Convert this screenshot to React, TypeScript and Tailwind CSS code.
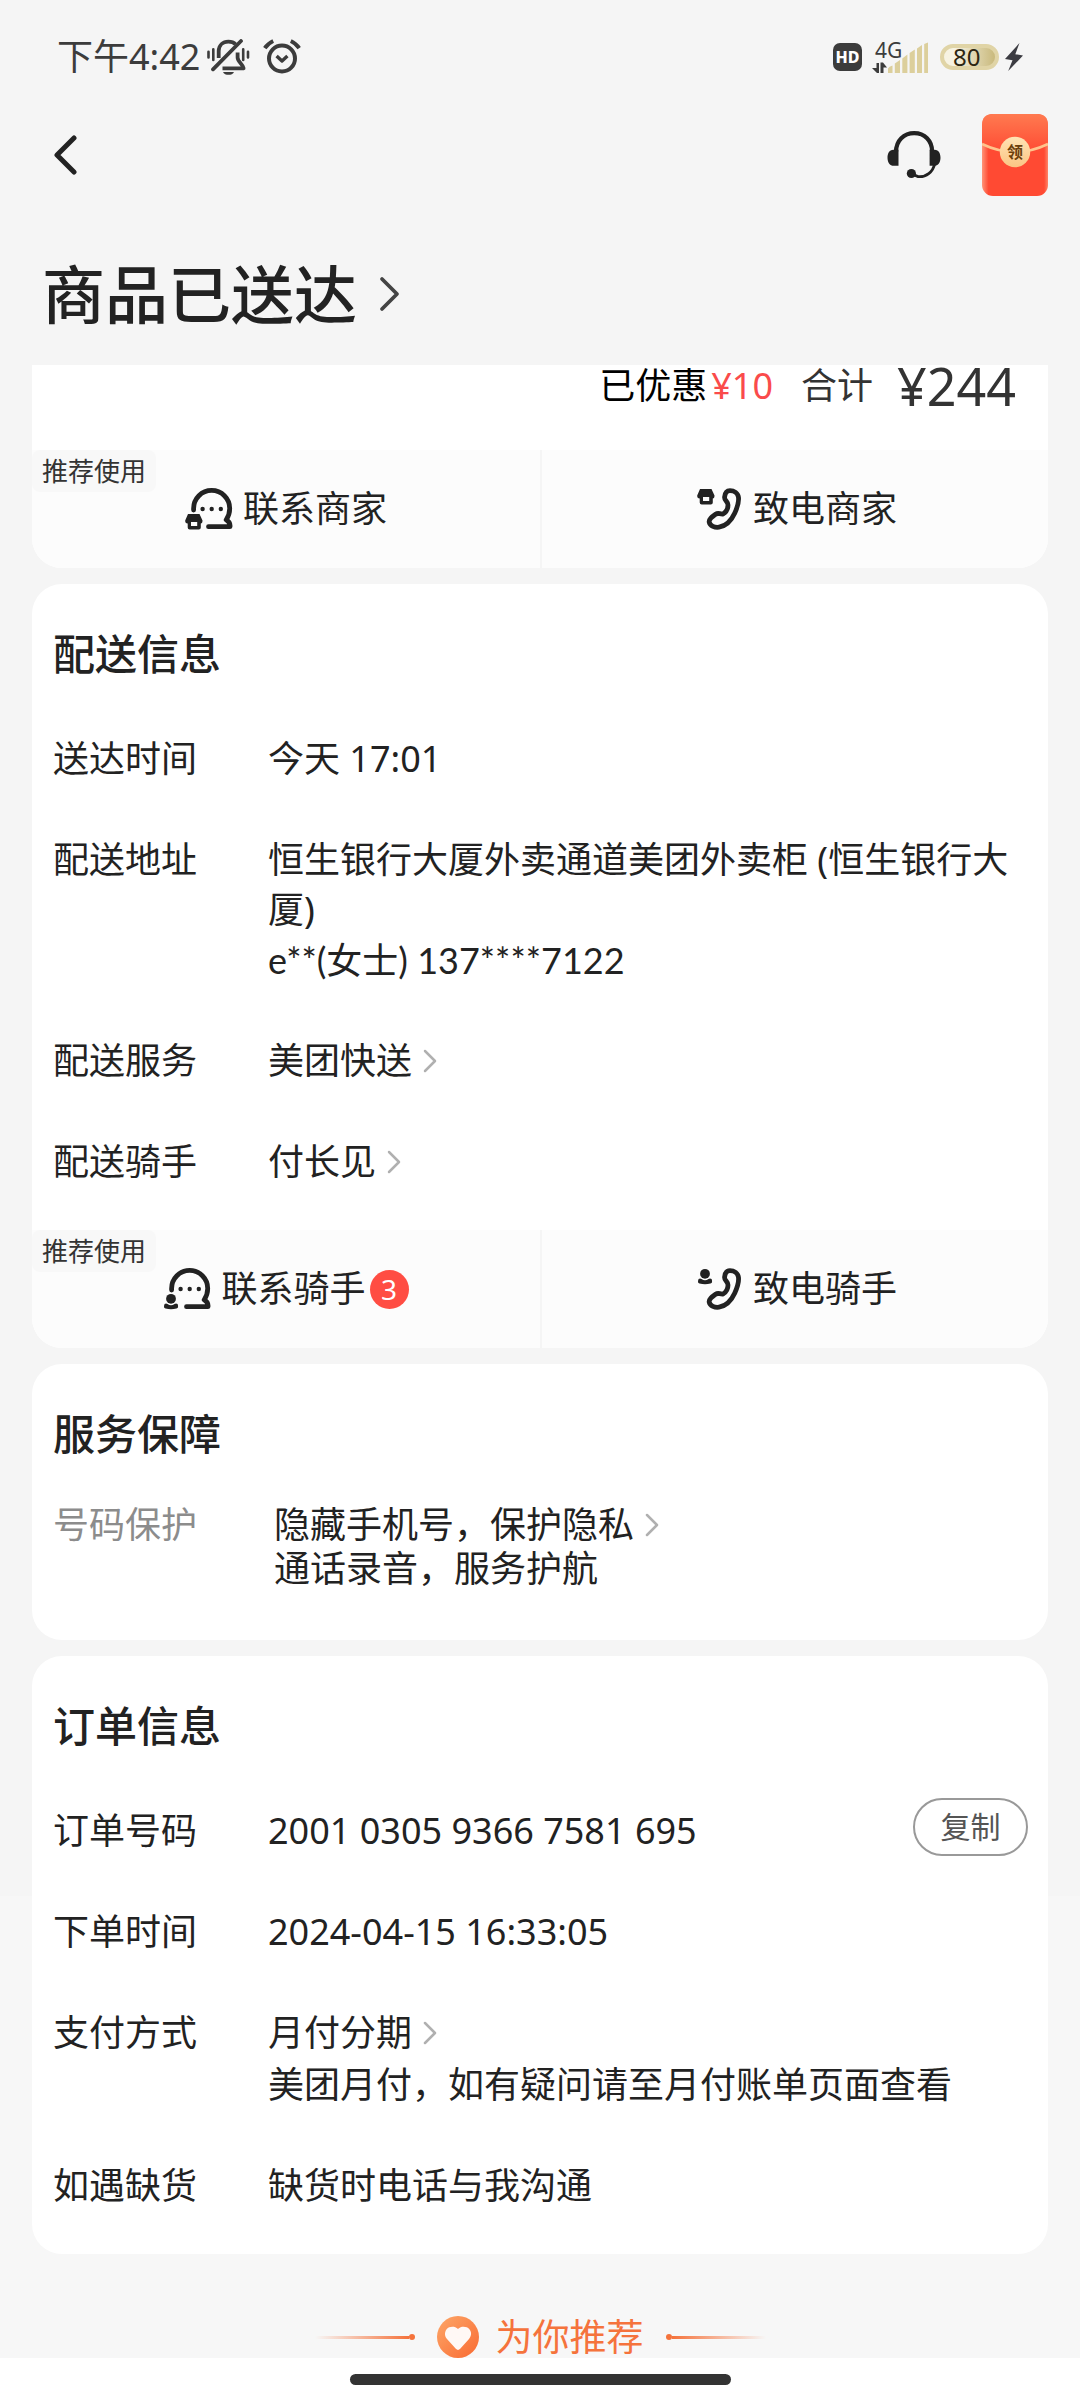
import type { ReactNode } from "react"

function Chevron({ className }: { className?: string }) {
  return (
    <svg viewBox="0 0 14 24" fill="none" stroke="currentColor" strokeWidth="2.5" strokeLinecap="round" strokeLinejoin="round" className={className} aria-hidden="true">
      <path d="M2 2 L12 12 L2 22" />
    </svg>
  )
}

function MutedBellIcon() {
  return (
    <svg viewBox="0 0 44 37" className="w-[44px] h-[37px]" fill="none" stroke="currentColor" strokeWidth="3.8" aria-hidden="true">
      <path d="M11.7 19 V12 C12 6 16 2.7 21.3 2.7 C24.5 2.7 27 3.6 28.5 5.2" />
      <path d="M30.6 13.5 V18.5 C30.6 23 36 25 36.6 29.3 H15.5" strokeLinejoin="round" />
      <path d="M34 2 L6 30.3" strokeLinecap="round" />
      <path d="M16 33 H27 C25.5 36.8 17.5 36.8 16 33Z" fill="currentColor" stroke="none" />
      <path d="M1.5 12.8 V18.4 M6.3 10.4 V21 M36.2 10.4 V21 M41 12.8 V18.4" strokeWidth="2.6" strokeLinecap="round" />
    </svg>
  )
}

function AlarmIcon() {
  return (
    <svg viewBox="0 0 38 36" className="w-[38px] h-[36px]" fill="none" stroke="currentColor" strokeWidth="4" aria-hidden="true">
      <circle cx="19" cy="19.5" r="13" />
      <path d="M13.6 17 L19 22 L24.4 17" strokeWidth="3.4" strokeLinejoin="round" />
      <path d="M1.8 9.2 C4 6 6.5 3.6 10.2 2 M36.2 9.2 C34 6 31.5 3.6 27.8 2" />
    </svg>
  )
}

function SignalIcon() {
  return (
    <svg viewBox="0 0 58 32" className="w-[58px] h-[32px] overflow-visible" aria-hidden="true">
      <text x="3" y="17" fontSize="21" fill="#3c3c3c">4G</text>
      <path d="M0 27 L4.5 27 V22 H7 V32 H5Z M8.5 21.5 H11 L15 26.5 H11.5 V32 H8.5Z" fill="#3c3c3c" />
      <path d="M17 27.5 Q18 25.5 21.5 24.5 V32 H17Z M23.8 22.5 L29 19 V32 H23.8Z M31.3 17.5 L36.4 13.5 V32 H31.3Z M38.6 12 L43.8 8.5 V32 H38.6Z M46 7.5 L51 4 V32 H46Z M53.2 3 L57 1.5 V32 H53.2Z" fill="#dccf9c" transform="translate(-1 0)" />
    </svg>
  )
}

function HeadsetIcon() {
  return (
    <svg viewBox="0 0 54 48" className="w-[54px] h-[48px]" fill="none" stroke="currentColor" aria-hidden="true">
      <path d="M9 21 C9 9.5 17 2.2 27.2 2.2 C37.5 2.2 45.2 9.5 45.2 21" strokeWidth="4.2" />
      <path d="M11.5 18.7 H6.5 C2 18.7 0.5 23 0.5 26.7 C0.5 31 2.5 34.8 7 34.8 H11.5Z M42.6 18.7 H47.5 C52 18.7 53.5 23 53.5 26.7 C53.5 31 51.5 34.8 47 34.8 H42.6Z" fill="currentColor" stroke="none" />
      <path d="M47.6 33 C46 41 39 46.5 31 45.6 L25 43" strokeWidth="2.8" />
      <circle cx="24.4" cy="42.5" r="4.6" fill="currentColor" stroke="none" />
    </svg>
  )
}

function RedPacketIcon() {
  return (
    <svg viewBox="0 0 66 82" className="w-[66px] h-[82px]" aria-hidden="true">
      <defs>
        <linearGradient id="flap" x1="0" y1="0" x2="0" y2="1">
          <stop offset="0" stopColor="#ff7a50" />
          <stop offset="1" stopColor="#ff4a33" />
        </linearGradient>
        <linearGradient id="sheen" x1="0" y1="0" x2="1" y2="0">
          <stop offset="0" stopColor="#ff9478" />
          <stop offset="0.1" stopColor="#ff4a33" />
          <stop offset="0.94" stopColor="#ff4a33" />
          <stop offset="1" stopColor="#ff8468" />
        </linearGradient>
        <linearGradient id="seal" x1="0" y1="0" x2="0" y2="1">
          <stop offset="0" stopColor="#ffe3b4" />
          <stop offset="1" stopColor="#fbc584" />
        </linearGradient>
      </defs>
      <rect width="66" height="82" rx="11" fill="url(#sheen)" />
      <path d="M0 30 V11 Q0 0 11 0 H55 Q66 0 66 11 V30 Q33 48 0 30Z" fill="url(#flap)" />
      <path d="M0 30 Q33 46 66 30" fill="none" stroke="#ffc48c" strokeWidth="2.6" />
      <circle cx="33" cy="38" r="15.2" fill="url(#seal)" />
      <text x="33" y="44" textAnchor="middle" fontSize="16" fontWeight="700" fill="#6b3f0c">领</text>
    </svg>
  )
}

function ShopMark() {
  return <path fillRule="evenodd" fill="currentColor" stroke="none" d="M3 0 H14.5 L17.5 6.5 Q17.5 9.5 15.8 9.5 V13.5 Q15.8 15.5 13.8 15.5 H4.7 Q2.7 15.5 2.7 13.5 V9.5 Q0 9.5 0.2 6.5Z M6 8 V12 H12.2 V8Z" />
}

function RiderMark() {
  return (
    <g fill="currentColor" stroke="none">
      <circle cx="8" cy="4.8" r="4.9" />
      <path d="M1.6 10 Q3 9 4.5 10 Q8 12.6 11.5 10 Q13 9 14.6 10 Q16 14 13.5 14.6 Q8 16 2.5 14.6 Q0 14 1.6 10Z" />
    </g>
  )
}

function ChatIcon({ mark }: { mark: ReactNode }) {
  return (
    <svg viewBox="0 0 48 42" className="w-[48px] h-[42px]" fill="none" stroke="currentColor" strokeWidth="4.8" strokeLinecap="round" strokeLinejoin="round" aria-hidden="true">
      <path d="M8.6 22 V20.5 A18 18 0 0 1 44.7 20.5 C44.7 25 43.4 28.5 41.2 31.8 Q45.5 34 45 38.7 H23.5" />
      <g fill="currentColor" stroke="none">
        <circle cx="17.6" cy="21" r="2.2" />
        <circle cx="26.7" cy="21" r="2.2" />
        <circle cx="35.8" cy="21" r="2.2" />
      </g>
      <g transform="translate(0 26)">{mark}</g>
    </svg>
  )
}

function PhoneIcon({ mark }: { mark: ReactNode }) {
  return (
    <svg viewBox="0 0 46 42" className="w-[46px] h-[42px]" fill="none" stroke="currentColor" strokeWidth="4.8" strokeLinejoin="round" aria-hidden="true">
      <path d="M33 2.6 C29.5 2.6 28 5 27.6 9 C27.2 13 31 13.2 31 17 C31 21 28.5 24.5 26 26 C22.5 26.3 21.5 24.3 18.5 26.3 C15 28.8 11.8 31 12.2 34 C13 38 18 39.8 22 39.2 C29 38 34.6 32 37.8 25 C40.5 19 42 14 41.5 9.5 C41 5 37 2.6 33 2.6Z" />
      <g transform="translate(0 1)">{mark}</g>
    </svg>
  )
}

function HeartIcon() {
  return (
    <svg viewBox="0 0 42 42" className="w-[42px] h-[42px] shrink-0" aria-hidden="true">
      <defs>
        <linearGradient id="heart" x1="0" y1="0" x2="1" y2="1">
          <stop offset="0" stopColor="#fda768" />
          <stop offset="1" stopColor="#f96a32" />
        </linearGradient>
      </defs>
      <circle cx="21" cy="21" r="21" fill="url(#heart)" />
      <path d="M21 13 C17.5 9.6 12 10.6 9.8 13 C7 16.5 7.8 20.5 10 23 L18.8 32.8 Q21 35 23.2 32.8 L32 23 C34.5 20 35 16 32.2 13 C30 10.6 24.5 9.6 21 13Z" fill="#fff8f5" />
    </svg>
  )
}

function Card({ title, children }: { title: string; children: ReactNode }) {
  return (
    <section className="mt-4 bg-white rounded-[30px] overflow-hidden">
      <h2 className="px-[21px] pt-[45px] text-[42px] leading-[50px] font-medium">{title}</h2>
      {children}
    </section>
  )
}

function Row({ label, children }: { label: string; children: ReactNode }) {
  return (
    <div className="flex">
      <dt className="w-[215px] shrink-0">{label}</dt>
      <dd className="flex-1">{children}</dd>
    </div>
  )
}

function LinkValue({ children }: { children: ReactNode }) {
  return (
    <a href="#" className="inline-flex items-center gap-[11px]">
      {children}
      <Chevron className="w-[14px] h-[24px] text-[#b0b0b0]" />
    </a>
  )
}

function ContactBar({ target, mark, unread }: { target: string; mark: ReactNode; unread?: number }) {
  return (
    <div className="relative grid grid-cols-2 h-[118px] bg-[#fcfcfc] rounded-b-[30px] overflow-hidden">
      <span className="absolute left-0 top-0 px-[10px] bg-[#f8f8f8] rounded-lg text-[26px] leading-[42px] text-[#333]">推荐使用</span>
      <button className="flex items-center justify-center gap-[10px]">
        <ChatIcon mark={mark} />
        <span className="flex items-center gap-1">
          联系{target}
          {unread && (
            <span className="w-[39px] h-[39px] rounded-full bg-[#ff4d43] text-white text-[28px] leading-[39px] text-center">{unread}</span>
          )}
        </span>
      </button>
      <button className="flex items-center justify-center gap-[10px] pl-1 border-l-2 border-[#f5f5f5]">
        <PhoneIcon mark={mark} />
        致电{target}
      </button>
    </div>
  )
}

export default function App() {
  return (
    <div className="bg-[linear-gradient(#f5f5f5_79%,#f7f7f7_79%)] text-[#222] text-[36px] leading-[50px] font-['Noto_Sans','Noto_Sans_CJK_SC',sans-serif]">
      <div className="flex items-center justify-between h-[114px] pl-[57px] pr-[57px] text-[#3c3c3c]">
        <div className="flex items-center">
          <span>下午4:42</span>
          <span className="ml-[7px]"><MutedBellIcon /></span>
          <span className="ml-3"><AlarmIcon /></span>
        </div>
        <div className="flex items-center">
          <span className="w-[29px] h-[28px] rounded-[7px] bg-[#3c3c3c] text-white text-[16px] leading-[28px] font-extrabold text-center">HD</span>
          <span className="ml-[10px]"><SignalIcon /></span>
          <span className="ml-[10px] w-[59px] h-[26px] rounded-full border-4 border-[#e0d4a6] bg-linear-to-r from-[#f7f3e2] from-20% to-[#c9b97c] text-[#2c2612] text-[24px] leading-[18px] pl-[9px]">80</span>
          <svg viewBox="0 0 18 28" className="ml-[6px] w-[18px] h-[28px]" fill="#3c3c42" aria-hidden="true">
            <path d="M14.5 0 L0 16 L7.5 17.2 L3.2 28 L18 12.6 L10.3 11.2Z" />
          </svg>
        </div>
      </div>

      <header className="flex items-center justify-between h-[82px] pl-[53px] pr-8">
        <button aria-label="返回">
          <svg viewBox="0 0 24 40" className="w-[24px] h-[40px]" fill="none" stroke="currentColor" strokeWidth="5" strokeLinecap="round" strokeLinejoin="round" aria-hidden="true">
            <path d="M21 3 L4 20 L21 37" />
          </svg>
        </button>
        <div className="flex items-center gap-[41px]">
          <button aria-label="客服"><HeadsetIcon /></button>
          <button aria-label="领红包"><RedPacketIcon /></button>
        </div>
      </header>

      <h1 className="mt-[62px] mb-[35px] px-[42px] text-[63px] leading-[72px] font-medium">
        <a href="#" className="inline-flex items-center gap-[22px]">
          商品已送达
          <Chevron className="w-[21px] h-[36px] text-[#444]" />
        </a>
      </h1>

      <main className="px-8">
        <section className="bg-white rounded-b-[30px]">
          <div className="flex items-center justify-end h-[42px] mb-[43px] pr-8">
            <span className="text-black">已优惠</span>
            <span className="ml-1 text-[#fa4b4b]">¥10</span>
            <span className="ml-7 text-[#333]">合计</span>
            <span className="ml-6 text-[52px] text-[#333]">¥244</span>
          </div>
          <ContactBar target="商家" mark={<ShopMark />} />
        </section>

        <Card title="配送信息">
          <dl className="flex flex-col gap-[51px] pl-[21px] pr-[22px] pt-[55px] pb-[43px]">
            <Row label="送达时间">今天 17:01</Row>
            <Row label="配送地址">
              恒生银行大厦外卖通道美团外卖柜 (恒生银行大厦)
              <p className="font-['Lato','Noto_Sans_CJK_SC',sans-serif]">e**(女士) 137****7122</p>
            </Row>
            <Row label="配送服务"><LinkValue>美团快送</LinkValue></Row>
            <Row label="配送骑手"><LinkValue>付长见</LinkValue></Row>
          </dl>
          <ContactBar target="骑手" mark={<RiderMark />} unread={3} />
        </Card>

        <Card title="服务保障">
          <dl className="px-[21px] pt-[44px] pb-[49px] leading-[44px]">
            <div className="flex">
              <dt className="w-[221px] shrink-0 text-[#8c8c8c]">号码保护</dt>
              <dd className="flex-1">
                <LinkValue>隐藏手机号，保护隐私</LinkValue>
                <p>通话录音，服务护航</p>
              </dd>
            </div>
          </dl>
        </Card>

        <Card title="订单信息">
          <dl className="flex flex-col gap-[51px] pl-[21px] pr-5 pt-[55px] pb-[43px]">
            <Row label="订单号码">
              <span className="flex items-end justify-between h-[50px]">
                2001 0305 9366 7581 695
                <button className="w-[115px] h-[58px] rounded-full border-2 border-[#999] text-[30px] text-[#555]">复制</button>
              </span>
            </Row>
            <Row label="下单时间">2024-04-15 16:33:05</Row>
            <Row label="支付方式">
              <LinkValue>月付分期</LinkValue>
              <p className="mt-[2px]">美团月付，如有疑问请至月付账单页面查看</p>
            </Row>
            <Row label="如遇缺货">缺货时电话与我沟通</Row>
          </dl>
        </Card>
      </main>

      <div className="flex items-center justify-center h-[104px] pt-[62px] text-[#f5733c]">
        <span className="flex items-center">
          <i className="w-[94px] h-[3px] bg-linear-to-r from-transparent to-[#f5733c]" />
          <i className="w-[6px] h-[6px] rounded-full bg-[#f5733c]" />
        </span>
        <span className="flex items-center gap-[17px] mx-[22px]">
          <HeartIcon />
          <span className="text-[37px] leading-[42px]">为你推荐</span>
        </span>
        <span className="flex items-center">
          <i className="w-[6px] h-[6px] rounded-full bg-[#f5733c]" />
          <i className="w-[94px] h-[3px] bg-linear-to-l from-transparent to-[#f5733c]" />
        </span>
      </div>
      <footer className="flex justify-center h-[42px] pt-4 bg-white">
        <span className="w-[381px] h-[11px] rounded-full bg-[#333]" />
      </footer>
    </div>
  )
}
